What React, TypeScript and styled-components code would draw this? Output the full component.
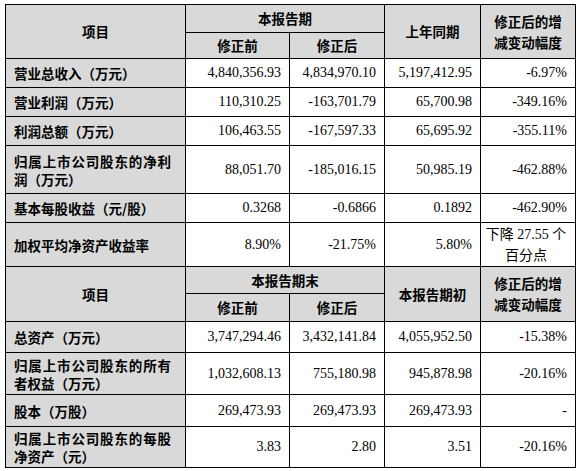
import React from 'react'
import styled, { createGlobalStyle } from 'styled-components'

const GlobalStyle = createGlobalStyle`
  html, body {
    margin: 0;
    padding: 0;
    background: #fff;
  }
`

const Page = styled.div`
  padding: 4px 0 0 5px;
  width: 578px;
  height: 471px;
  box-sizing: border-box;
  overflow: hidden;
`

const Table = styled.table`
  border-collapse: collapse;
  table-layout: fixed;
  width: 570px;
  color: #000;
  font-family: "Liberation Serif", "Noto Sans CJK SC", serif;
  font-size: 14px;
  line-height: 18px;
`

const Row = styled.tr<{ $h: number }>`
  height: ${p => p.$h}px;
`

const HeadCell = styled.td`
  background: #d9d9d9;
  border: 1px solid #000;
  padding: 0 4px;
  text-align: center;
  vertical-align: middle;
  font-family: "Noto Sans CJK SC", sans-serif;
  font-weight: 700;
  font-size: 13.5px;
  line-height: 21px;
`

const LabelCell = styled.td`
  background: #d9d9d9;
  border: 1px solid #000;
  padding: 0 14px 0 8px;
  text-align: justify;
  text-justify: inter-character;
  vertical-align: middle;
  font-family: "Noto Sans CJK SC", sans-serif;
  font-weight: 700;
  font-size: 13.5px;
`

const NumCell = styled.td<{ $center?: boolean }>`
  background: #fff;
  border: 1px solid #000;
  padding: 0 8px 0 4px;
  text-align: ${p => (p.$center ? 'center' : 'right')};
  line-height: ${p => (p.$center ? '21px' : '18px')};
  vertical-align: middle;
  white-space: nowrap;
`

type DataRow = { label: string; h: number; values: React.ReactNode[] }

const profitRows: DataRow[] = [
  { label: '营业总收入（万元）', h: 29, values: ['4,840,356.93', '4,834,970.10', '5,197,412.95', '-6.97%'] },
  { label: '营业利润（万元）', h: 29, values: ['110,310.25', '-163,701.79', '65,700.98', '-349.16%'] },
  { label: '利润总额（万元）', h: 29, values: ['106,463.55', '-167,597.33', '65,695.92', '-355.11%'] },
  { label: '归属上市公司股东的净利润（万元）', h: 48, values: ['88,051.70', '-185,016.15', '50,985.19', '-462.88%'] },
  { label: '基本每股收益（元/股）', h: 29, values: ['0.3268', '-0.6866', '0.1892', '-462.90%'] },
]

const balanceRows: DataRow[] = [
  { label: '总资产（万元）', h: 31, values: ['3,747,294.46', '3,432,141.84', '4,055,952.50', '-15.38%'] },
  { label: '归属上市公司股东的所有者权益（万元）', h: 42, values: ['1,032,608.13', '755,180.98', '945,878.98', '-20.16%'] },
  { label: '股本（万股）', h: 32, values: ['269,473.93', '269,473.93', '269,473.93', '-'] },
  { label: '归属上市公司股东的每股净资产（元）', h: 41, values: ['3.83', '2.80', '3.51', '-20.16%'] },
]

function Header({ period, prior, top, bottom }: { period: string; prior: string; top: number; bottom: number }) {
  return (
    <>
      <Row $h={top}>
        <HeadCell rowSpan={2}>项目</HeadCell>
        <HeadCell colSpan={2}>{period}</HeadCell>
        <HeadCell rowSpan={2}>{prior}</HeadCell>
        <HeadCell rowSpan={2}>
          修正后的增<br />减变动幅度
        </HeadCell>
      </Row>
      <Row $h={bottom}>
        <HeadCell>修正前</HeadCell>
        <HeadCell>修正后</HeadCell>
      </Row>
    </>
  )
}

function Body({ rows }: { rows: DataRow[] }) {
  return (
    <>
      {rows.map(r => (
        <Row key={r.label} $h={r.h}>
          <LabelCell>{r.label}</LabelCell>
          {r.values.map((v, i) => (
            <NumCell key={i}>{v}</NumCell>
          ))}
        </Row>
      ))}
    </>
  )
}

export default function App() {
  return (
    <>
      <GlobalStyle />
      <Page>
        <Table>
          <colgroup>
            <col style={{ width: 180 }} />
            <col style={{ width: 104 }} />
            <col style={{ width: 95 }} />
            <col style={{ width: 96 }} />
            <col style={{ width: 95 }} />
          </colgroup>
          <tbody>
            <Header period="本报告期" prior="上年同期" top={28} bottom={26} />
            <Body rows={profitRows} />
            <Row $h={44}>
              <LabelCell>加权平均净资产收益率</LabelCell>
              <NumCell>8.90%</NumCell>
              <NumCell>-21.75%</NumCell>
              <NumCell>5.80%</NumCell>
              <NumCell $center>
                下降 27.55 个<br />百分点
              </NumCell>
            </Row>
            <Header period="本报告期末" prior="本报告期初" top={27} bottom={28} />
            <Body rows={balanceRows} />
          </tbody>
        </Table>
      </Page>
    </>
  )
}
